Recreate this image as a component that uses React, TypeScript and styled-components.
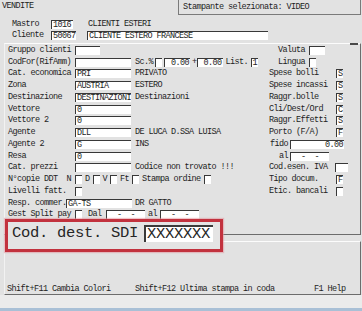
import React from "react";
import styled, { createGlobalStyle } from "styled-components";

const GlobalStyle = createGlobalStyle`
  html, body { margin: 0; padding: 0; background: #e2e2e2; }
  body {
    font-family: "Liberation Mono", "Courier New", monospace;
    font-size: 8.5px;
    letter-spacing: -0.6px;
    color: #1e1e1e;
  }
`;

const Screen = styled.div`
  position: relative;
  width: 362px;
  height: 311px;
  overflow: hidden;
  background: #e2e2e2;
  display: flex;
  flex-direction: column;
`;

const Header = styled.header`
  height: 43px;
  flex: none;
  display: flex;
  flex-direction: column;
`;

const TitleBar = styled.div`
  height: 15px;
  display: flex;
  justify-content: space-between;
  align-items: flex-start;
`;

const Title = styled.span`
  padding: 1.5px 0 0 2px;
  line-height: 9px;
`;

const PrinterBox = styled.div`
  width: 183px;
  height: 15px;
  margin-right: 1px;
  box-sizing: border-box;
  border: 1px solid #7a7a7a;
  border-top: none;
  padding-left: 4px;
  line-height: 14px;
  white-space: pre;
`;

const HeaderRow = styled.div<{ $first?: boolean }>`
  height: 11px;
  margin-top: ${(p) => (p.$first ? 4 : 0)}px;
  display: flex;
  align-items: center;
  padding-left: 12px;
`;

const HeaderLabel = styled.span`
  width: 39px;
  flex: none;
  line-height: 9px;
`;

const Field = styled.span<{ $w: number; $ml?: number; $right?: boolean }>`
  display: inline-block;
  flex: none;
  box-sizing: border-box;
  width: ${(p) => p.$w}px;
  height: 9px;
  margin-left: ${(p) => p.$ml ?? 0}px;
  background: #ffffff;
  border-top: 1px solid #383838;
  border-left: 1px solid #383838;
  padding: 0 1px;
  line-height: 8px;
  text-align: ${(p) => (p.$right ? "right" : "left")};
  white-space: pre;
  overflow: hidden;
`;

const Text = styled.span<{ $ml?: number }>`
  flex: none;
  margin-left: ${(p) => p.$ml ?? 0}px;
  line-height: 9px;
  white-space: pre;
`;

const Panel = styled.section`
  position: relative;
  flex: none;
  height: 192px;
  margin: 0 1px 0 4px;
  box-sizing: border-box;
  border-top: 1px solid #fcfcfc;
  border-left: 1px solid #f2f2f2;
  border-right: 1px solid #6c6c6c;
  border-bottom: 1px solid #6c6c6c;
  padding: 0.5px 0 0 3px;

  &::after {
    content: "";
    position: absolute;
    top: -1px;
    right: 2px;
    width: 8px;
    height: 2px;
    background: #4a4a4a;
  }
`;

const Row = styled.div<{ $label?: number }>`
  height: 11.75px;
  display: grid;
  grid-template-columns: ${(p) => p.$label ?? 67}px 1fr 91px;
  align-items: center;
`;

const Label = styled.span`
  line-height: 9px;
  white-space: pre;
`;

const Cell = styled.div<{ $gap?: number }>`
  display: flex;
  align-items: center;
  gap: ${(p) => p.$gap ?? 0}px;
  min-width: 0;
`;

const RLabel = styled.span<{ $w: number; $right?: boolean }>`
  flex: none;
  width: ${(p) => p.$w}px;
  text-align: ${(p) => (p.$right ? "right" : "left")};
  line-height: 9px;
  white-space: pre;
`;

const FooterPanel = styled.section`
  flex: none;
  height: 54px;
  margin: 6px 1px 0 4px;
  box-sizing: border-box;
  border-top: 1px solid #fcfcfc;
  border-left: 1px solid #f2f2f2;
  border-right: 1px solid #6c6c6c;
  border-bottom: 1px solid #6c6c6c;
  padding: 0 0 0.5px 2px;
  display: flex;
  flex-direction: column;
  justify-content: flex-end;
`;

const KeyBar = styled.div`
  display: grid;
  grid-template-columns: 128px 179px auto;
  line-height: 9px;
  white-space: pre;
`;

const BottomBand = styled.div`
  flex: none;
  height: 13px;
  background: #ebebeb;
`;

const WindowEdge = styled.div`
  flex: none;
  height: 3px;
  background: #a9c0d6;
`;

const Callout = styled.div`
  position: absolute;
  left: 5px;
  top: 219px;
  width: 218px;
  height: 33px;
  box-sizing: border-box;
  border: 3px solid #c2323e;
  box-shadow: 0 0 1px 1px rgba(226, 150, 158, 0.55);
  background: #e4e4e4;
  display: flex;
  align-items: flex-start;
  gap: 6px;
  padding: 3px 0 0 4px;
  font-size: 15.5px;
  letter-spacing: -0.3px;
  color: #262626;
`;

const CalloutLabel = styled.span`
  line-height: 17px;
  white-space: pre;
`;

const CalloutField = styled.span`
  box-sizing: border-box;
  width: 69px;
  height: 17px;
  background: #ffffff;
  border-top: 2px solid #3a3a3a;
  border-left: 2px solid #3a3a3a;
  padding-left: 1px;
  line-height: 15px;
  overflow: hidden;
  white-space: pre;
`;

const Check = () => <Field $w={7} />;

export default function App() {
  return (
    <>
      <GlobalStyle />
      <Screen>
        <Header>
          <TitleBar>
            <Title>VENDITE</Title>
            <PrinterBox>Stampante selezionata: VIDEO</PrinterBox>
          </TitleBar>
          <HeaderRow $first>
            <HeaderLabel>Mastro</HeaderLabel>
            <Field $w={22}>1016</Field>
            <Text $ml={15}>CLIENTI ESTERI</Text>
          </HeaderRow>
          <HeaderRow>
            <HeaderLabel>Cliente</HeaderLabel>
            <Field $w={25}>50067</Field>
            <Field $w={181} $ml={11}>CLIENTE ESTERO FRANCESE</Field>
          </HeaderRow>
        </Header>

        <Panel>
          <Row>
            <Label>Gruppo clienti</Label>
            <Cell><Field $w={25} /></Cell>
            <Cell>
              <RLabel $w={36} $right>Valuta</RLabel>
              <Field $w={16} $ml={4} />
            </Cell>
          </Row>
          <Row>
            <Label>CodFor(RifAmm)</Label>
            <Cell>
              <Field $w={56} />
              <Text $ml={4}>Sc.%</Text>
              <Field $w={7} $ml={2} />
              <Field $w={26} $ml={2} $right>0.00</Field>
              <Text $ml={2}>+</Text>
              <Field $w={26} $right>0.00</Field>
              <Text $ml={3}>List.</Text>
              <Field $w={7} $ml={2.5}>1</Field>
            </Cell>
            <Cell>
              <RLabel $w={36} $right>Lingua</RLabel>
              <Field $w={7} $ml={4} />
            </Cell>
          </Row>
          <Row>
            <Label>Cat. economica</Label>
            <Cell><Field $w={56}>PRI</Field><Text $ml={4}>PRIVATO</Text></Cell>
            <Cell><RLabel $w={67}>Spese bolli</RLabel><Field $w={7}>S</Field></Cell>
          </Row>
          <Row>
            <Label>Zona</Label>
            <Cell><Field $w={56}>AUSTRIA</Field><Text $ml={4}>ESTERO</Text></Cell>
            <Cell><RLabel $w={67}>Spese incassi</RLabel><Field $w={7}>S</Field></Cell>
          </Row>
          <Row>
            <Label>Destinazione</Label>
            <Cell><Field $w={56}>DESTINAZIONI</Field><Text $ml={4}>Destinazioni</Text></Cell>
            <Cell><RLabel $w={67}>Raggr.bolle</RLabel><Field $w={7}>S</Field></Cell>
          </Row>
          <Row>
            <Label>Vettore</Label>
            <Cell><Field $w={56}>0</Field></Cell>
            <Cell><RLabel $w={67}>Cli/Dest/Ord</RLabel><Field $w={7}>C</Field></Cell>
          </Row>
          <Row>
            <Label>Vettore 2</Label>
            <Cell><Field $w={56}>0</Field></Cell>
            <Cell><RLabel $w={67}>Raggr.Effetti</RLabel><Field $w={7}>S</Field></Cell>
          </Row>
          <Row>
            <Label>Agente</Label>
            <Cell><Field $w={56}>DLL</Field><Text $ml={4}>DE LUCA D.SSA LUISA</Text></Cell>
            <Cell><RLabel $w={67}>Porto (F/A)</RLabel><Field $w={7}>F</Field></Cell>
          </Row>
          <Row>
            <Label>Agente 2</Label>
            <Cell><Field $w={56}>G</Field><Text $ml={4}>INS</Text></Cell>
            <Cell>
              <RLabel $w={19} $right>fido</RLabel>
              <Field $w={54} $ml={2} $right>0.00</Field>
            </Cell>
          </Row>
          <Row>
            <Label>Resa</Label>
            <Cell><Field $w={56}>0</Field></Cell>
            <Cell>
              <RLabel $w={19} $right>al</RLabel>
              <Field $w={39} $ml={2}>{"  -  -"}</Field>
            </Cell>
          </Row>
          <Row>
            <Label>Cat. prezzi</Label>
            <Cell><Field $w={56} /><Text $ml={4}>Codice non trovato !!!</Text></Cell>
            <Cell><RLabel $w={66}>Cod.esen. IVA</RLabel><Field $w={13} /></Cell>
          </Row>
          <Row>
            <Label>{"N°copie DDT  N"}</Label>
            <Cell $gap={3}>
              <Check />
              <Text>D</Text>
              <Check />
              <Text>V</Text>
              <Check />
              <Text>Ft</Text>
              <Check />
              <Text>Stampa ordine</Text>
              <Check />
            </Cell>
            <Cell><RLabel $w={67}>Tipo docum.</RLabel><Field $w={7}>F</Field></Cell>
          </Row>
          <Row>
            <Label>Livelli fatt.</Label>
            <Cell><Check /></Cell>
            <Cell><RLabel $w={67}>Etic. bancali</RLabel><Field $w={7} /></Cell>
          </Row>
          <Row $label={58}>
            <Label>Resp. commer.</Label>
            <Cell><Field $w={66}>GA-TS</Field><Text $ml={3}>DR GATTO</Text></Cell>
            <Cell />
          </Row>
          <Row>
            <Label>Gest Split pay</Label>
            <Cell>
              <Check />
              <Text $ml={6}>Dal</Text>
              <Field $w={39} $ml={4.5}>{"  -  -"}</Field>
              <Text $ml={3}>al</Text>
              <Field $w={39} $ml={3}>{"  -  -"}</Field>
            </Cell>
            <Cell />
          </Row>
        </Panel>

        <FooterPanel>
          <KeyBar>
            <span>Shift+F11 Cambia Colori</span>
            <span>Shift+F12 Ultima stampa in coda</span>
            <span>F1 Help</span>
          </KeyBar>
        </FooterPanel>
        <BottomBand />
        <WindowEdge />

        <Callout>
          <CalloutLabel>Cod. dest. SDI</CalloutLabel>
          <CalloutField>XXXXXXX</CalloutField>
        </Callout>
      </Screen>
    </>
  );
}
